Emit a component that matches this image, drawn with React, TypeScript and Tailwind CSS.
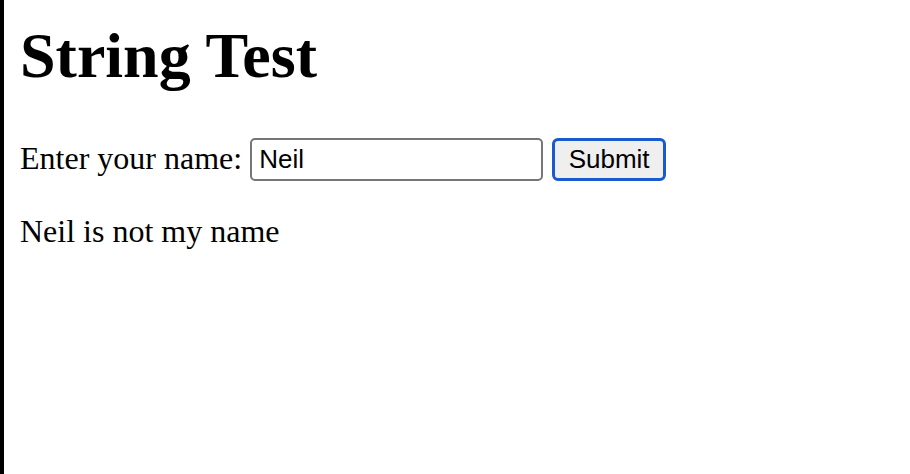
export default function App() {
  return (
    <div className="min-h-[474px] border-l-4 border-black bg-white pl-4 pt-5 text-black font-['Liberation_Serif','Times_New_Roman',serif]">
      <h1 className="text-[64px] font-bold leading-[72px]">String Test</h1>

      <form
        className="mt-[44px] flex items-start"
        onSubmit={(e) => e.preventDefault()}
      >
        <label className="mt-[2px] text-[32px] leading-[40px]">Enter your name:</label>
        <input
          type="text"
          defaultValue="Neil"
          className="ml-2 mt-[2px] h-[43px] w-[293px] rounded-[5px] border-2 border-[#767676] bg-white px-[7px] text-[26px] text-black outline-none font-['Liberation_Sans',Arial,sans-serif]"
        />
        <button
          type="submit"
          className="ml-[9px] mt-[2px] flex h-[43px] w-[114px] items-center justify-center rounded-[6px] border-[3px] border-[#1a5bcc] bg-[#efefef] text-[26px] text-black font-['Liberation_Sans',Arial,sans-serif]"
        >
          Submit
        </button>
      </form>

      <p className="mt-[30px] text-[32px] leading-[40px]">Neil is not my name</p>
    </div>
  );
}
